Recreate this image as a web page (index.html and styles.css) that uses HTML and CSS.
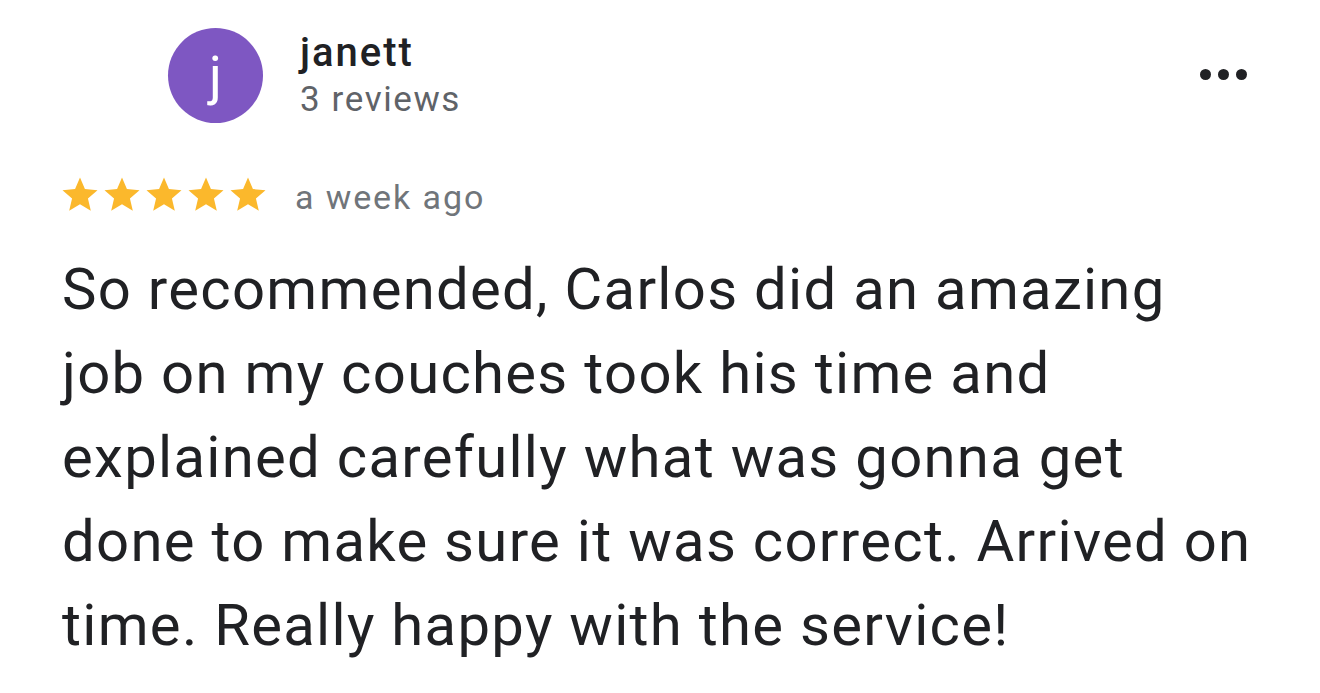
FILE: index.html
```html
<!DOCTYPE html>
<html>
<head>
<meta charset="utf-8">
<link rel="stylesheet" href="styles.css">
</head>
<body>
<div class="review">
  <div class="header">
    <div class="avatar">j</div>
    <div class="who">
      <div class="name">janett</div>
      <div class="count">3 reviews</div>
    </div>
    <div class="more">
      <span class="dot"></span><span class="dot"></span><span class="dot"></span>
    </div>
  </div>
  <div class="rating">
    <div class="stars">
      <svg class="star" viewBox="0 0 24 24"><path d="M12 17.27L18.18 21l-1.64-7.03L22 9.24l-7.19-.61L12 2 9.19 8.63 2 9.24l5.46 4.73L5.82 21z"/></svg>
      <svg class="star" viewBox="0 0 24 24"><path d="M12 17.27L18.18 21l-1.64-7.03L22 9.24l-7.19-.61L12 2 9.19 8.63 2 9.24l5.46 4.73L5.82 21z"/></svg>
      <svg class="star" viewBox="0 0 24 24"><path d="M12 17.27L18.18 21l-1.64-7.03L22 9.24l-7.19-.61L12 2 9.19 8.63 2 9.24l5.46 4.73L5.82 21z"/></svg>
      <svg class="star" viewBox="0 0 24 24"><path d="M12 17.27L18.18 21l-1.64-7.03L22 9.24l-7.19-.61L12 2 9.19 8.63 2 9.24l5.46 4.73L5.82 21z"/></svg>
      <svg class="star" viewBox="0 0 24 24"><path d="M12 17.27L18.18 21l-1.64-7.03L22 9.24l-7.19-.61L12 2 9.19 8.63 2 9.24l5.46 4.73L5.82 21z"/></svg>
    </div>
    <span class="when">a week ago</span>
  </div>
  <p class="text">So recommended, Carlos did an amazing<br>job on my couches took his time and<br>explained carefully what was gonna get<br>done to make sure it was correct. Arrived on<br>time. Really happy with the service!</p>
</div>
</body>
</html>
```

FILE: styles.css
```css
html, body {
  margin: 0;
  background: #ffffff;
}
body {
  font-family: Roboto, "Noto Sans", "Liberation Sans", sans-serif;
  color: #202124;
  width: 1320px;
  height: 693px;
  overflow: hidden;
}
.review {
  padding: 28px 0 0 62px;
}
.header {
  display: flex;
  align-items: flex-start;
}
.avatar {
  width: 95px;
  height: 95px;
  border-radius: 50%;
  background: #7e57c2;
  color: #ffffff;
  margin-left: 106px;
  display: flex;
  align-items: center;
  justify-content: center;
  font-size: 54px;
  font-weight: 400;
  line-height: 1;
  flex: none;
}
.who {
  margin-left: 37px;
  display: flex;
  flex-direction: column;
  padding-top: 3px;
}
.name {
  font-size: 40px;
  font-weight: 500;
  line-height: 44px;
  letter-spacing: 2px;
  color: #202124;
}
.count {
  font-size: 35px;
  line-height: 40px;
  letter-spacing: 1.6px;
  color: #5f6368;
  margin-top: 5px;
}
.more {
  margin-left: auto;
  margin-right: 73px;
  margin-top: 41px;
  display: flex;
  gap: 7px;
}
.dot {
  width: 11px;
  height: 11px;
  border-radius: 50%;
  background: #202124;
}
.rating {
  display: flex;
  align-items: center;
  margin-top: 50px;
  margin-left: -3px;
}
.stars {
  display: flex;
}
.star {
  width: 42px;
  height: 42px;
  fill: #fbb82c;
}
.when {
  margin-left: 26px;
  font-size: 34px;
  color: #70757a;
  line-height: 40px;
  letter-spacing: 1.9px;
  padding-top: 4px;
}
.text {
  margin: 30px 0 0 0;
  font-size: 58px;
  line-height: 84px;
  letter-spacing: 1.3px;
  color: #202124;
}
```
